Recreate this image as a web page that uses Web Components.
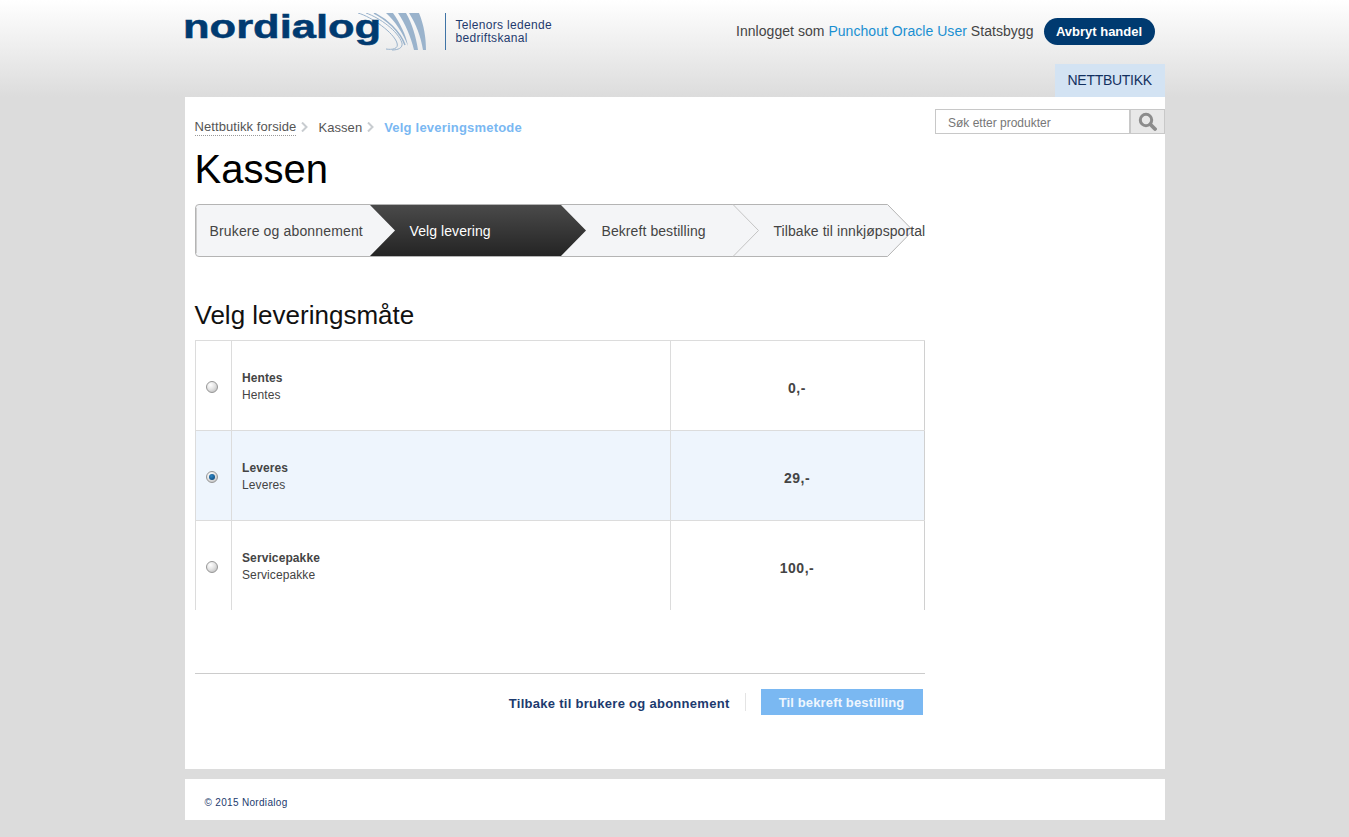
<!DOCTYPE html>
<html lang="no">
<head>
<meta charset="utf-8">
<title>Nordialog</title>
<style>
    html, body { margin: 0; padding: 0; }
    body {
        background: #dcdcdc;
        font-family: "Liberation Sans", Arial, sans-serif;
        color: #444;
    }
</style>
</head>
<body>
<nd-header></nd-header>
<nd-page>
    <nd-breadcrumb slot="main"></nd-breadcrumb>
    <h1-title slot="main">Kassen</h1-title>
    <nd-steps slot="main">
        <nd-step width="175" pad="15" style="letter-spacing:.15px">Brukere og abonnement</nd-step>
        <nd-step width="192" pad="40">Velg levering</nd-step>
        <nd-step width="172" pad="40">Bekreft bestilling</nd-step>
        <nd-step width="191" pad="40">Tilbake til innkjøpsportal</nd-step>
    </nd-steps>
    <nd-delivery slot="main">
        <nd-option name="Hentes" price="0,-"></nd-option>
        <nd-option name="Leveres" price="29,-" selected></nd-option>
        <nd-option name="Servicepakke" price="100,-"></nd-option>
    </nd-delivery>
    <nd-actions slot="main"></nd-actions>
    <nd-search slot="side"></nd-search>
</nd-page>
<nd-footer></nd-footer>

<script>
class NdHeader extends HTMLElement {
    constructor() {
        super();
        const shadowRoot = this.attachShadow({mode: 'open'});
        shadowRoot.innerHTML = `
            <style>
                :host {
                    display: block;
                    height: 97px;
                    background: linear-gradient(#fff 0, #dcdcdc 100%);
                }
                .wrap {
                    width: 980px;
                    height: 97px;
                    margin: 0 auto;
                    display: flex;
                    flex-direction: column;
                }
                .top {
                    height: 64px;
                    display: flex;
                    align-items: flex-start;
                }
                .logo {
                    display: flex;
                    width: 260px;
                    height: 38px;
                    margin-top: 13px;
                    position: relative;
                    overflow: visible;
                }
                .word {
                    font-weight: bold;
                    font-size: 33px;
                    line-height: 33px;
                    color: #003a70;
                    -webkit-text-stroke: .5px #003a70;
                    transform-origin: 0 0;
                    transform: scale(1.318, 1);
                    white-space: nowrap;
                    margin: -3px 0 0 -2px;
                    position: relative;
                    z-index: 1;
                }
                .swirl {
                    position: absolute;
                    left: 171px;
                    top: 0;
                }
                .tag {
                    margin-top: 13px;
                    height: 37px;
                    border-left: 1px solid #3f74a6;
                    padding: 6px 0 0 10px;
                    box-sizing: border-box;
                    font-size: 12px;
                    line-height: 13px;
                    letter-spacing: .32px;
                    color: #1f3a6e;
                    width: 200px;
                }
                .user {
                    margin-left: auto;
                    display: flex;
                    align-items: center;
                    height: 27px;
                    margin-top: 18px;
                    font-size: 14px;
                    color: #444;
                    white-space: pre;
                    padding-right: 10px;
                }
                .user .who { letter-spacing: .04px; margin-top: -2px; }
                .user a { color: #1a8fd1; text-decoration: none; }
                .btn {
                    margin-left: 10px;
                    width: 111px;
                    height: 27px;
                    border-radius: 14px;
                    background: #003a70;
                    color: #fff;
                    font-weight: bold;
                    font-size: 13px;
                    line-height: 27px;
                    text-align: center;
                }
                .tabs { display: flex; justify-content: flex-end; }
                .tab {
                    width: 110px;
                    box-sizing: border-box;
                    height: 33px;
                    line-height: 33px;
                    padding-left: 13px;
                    background: #d3e3f3;
                    color: #13315f;
                    font-size: 14px;
                    letter-spacing: -.28px;
                }
            </style>
            <div class="wrap">
                <div class="top">
                    <div class="logo">
                        <span class="word">nordialog</span>
                        <svg class="swirl" width="72" height="38" viewBox="0 0 72 38" fill="#9ab3cc" stroke="none">
                            <path d="M53 0H63C68 12 70 25 70 37H67C65 24 60 11 53 0Z"/>
                            <path d="M42 0H50C56 10 60 24 62 37H58C55 24 49 10 42 0Z"/>
                            <path d="M30 0H37C44 10 50 22 52 33C47 20 39 8 30 0Z"/>
                            <path d="M2 0C16 4 38 20 41 30C43 36 36 37 30 36" fill="none" stroke="#9ab3cc"/>
                            <path d="M10 0C24 5 42 18 46 30C47 35 42 37 36 37" fill="none" stroke="#9ab3cc"/>
                            <path d="M18 0C30 6 44 18 49 32" fill="none" stroke="#9ab3cc" stroke-width="1.5"/>
                        </svg>
                    </div>
                    <div class="tag">Telenors ledende<br>bedriftskanal</div>
                    <div class="user"><span class="who">Innlogget som <a href="#">Punchout Oracle User</a> Statsbygg</span><span class="btn">Avbryt handel</span></div>
                </div>
                <div class="tabs"><div class="tab">NETTBUTIKK</div></div>
            </div>
        `;
    }
}
customElements.define('nd-header', NdHeader);

class NdPage extends HTMLElement {
    constructor() {
        super();
        const shadowRoot = this.attachShadow({mode: 'open'});
        shadowRoot.innerHTML = `
            <style>
                :host {
                    display: flex;
                    width: 980px;
                    height: 672px;
                    margin: 0 auto;
                    background: #fff;
                }
                .main { width: 730px; margin-left: 10px; }
                .side { width: 230px; margin-left: 10px; padding-top: 12px; }
            </style>
            <div class="main"><slot name="main"></slot></div>
            <div class="side"><slot name="side"></slot></div>
        `;
    }
}
customElements.define('nd-page', NdPage);

class NdBreadcrumb extends HTMLElement {
    constructor() {
        super();
        const shadowRoot = this.attachShadow({mode: 'open'});
        shadowRoot.innerHTML = `
            <style>
                :host {
                    display: flex;
                    align-items: center;
                    height: 20px;
                    margin-top: 20px;
                    font-size: 13px;
                    letter-spacing: .08px;
                    color: #555;
                    white-space: nowrap;
                }
                a { color: #555; text-decoration: none; border-bottom: 1px dotted #999; line-height: 16px; }
                svg { margin: 0 10px 0 5px; }
                b { color: #7ab8f2; letter-spacing: .2px; }
            </style>
            <a href="#">Nettbutikk forside</a>
            <svg width="7" height="10" viewBox="0 0 7 10" fill="none" stroke="#c8ccd0" stroke-width="2"><path d="M1 0.5 5.5 5 1 9.5"/></svg>
            <span>Kassen</span>
            <svg width="7" height="10" viewBox="0 0 7 10" fill="none" stroke="#c8ccd0" stroke-width="2"><path d="M1 0.5 5.5 5 1 9.5"/></svg>
            <b>Velg leveringsmetode</b>
        `;
    }
}
customElements.define('nd-breadcrumb', NdBreadcrumb);

class H1Title extends HTMLElement {
    constructor() {
        super();
        const shadowRoot = this.attachShadow({mode: 'open'});
        shadowRoot.innerHTML = `
            <style>
                :host {
                    display: block;
                    height: 67px;
                    font-size: 40px;
                    line-height: 64px;
                    color: #000;
                }
            </style>
            <slot></slot>
        `;
    }
}
customElements.define('h1-title', H1Title);

class NdSteps extends HTMLElement {
    constructor() {
        super();
        const shadowRoot = this.attachShadow({mode: 'open'});
        shadowRoot.innerHTML = `
            <style>
                :host {
                    display: flex;
                    position: relative;
                    height: 53px;
                    width: 730px;
                }
                svg { position: absolute; left: 0; top: 0; }
                .row { display: flex; position: relative; }
            </style>
            <svg width="730" height="53" viewBox="0 0 730 53">
                <defs>
                    <linearGradient id="dark" x1="0" y1="0" x2="0" y2="1">
                        <stop offset="0" stop-color="#4a4a4a"/>
                        <stop offset="1" stop-color="#242424"/>
                    </linearGradient>
                </defs>
                <path d="M4 .5H692.5L718 26.500 692.500 52.500H4Q.5 52.500 .5 49V4Q.5 .5 4 .5Z" fill="#f4f5f7" stroke="#b4b4b4"/>
                <path d="M1.500 4V49" stroke="#d0d0d0" stroke-width="1"/>
                <path d="M538 .5 563.500 26.500 538 52.500" fill="none" stroke="#c4c4c4"/>
                <path d="M175 1H366L391 26.500 366 52H175L200 26.500Z" fill="url(#dark)"/>
            </svg>
            <div class="row"><slot></slot></div>
        `;
    }
}
customElements.define('nd-steps', NdSteps);

class NdStep extends HTMLElement {
    constructor() {
        super();
        const shadowRoot = this.attachShadow({mode: 'open'});
        shadowRoot.innerHTML = `
            <style>
                :host {
                    display: block;
                    height: 53px;
                    box-sizing: border-box;
                    font-size: 14px;
                    line-height: 54px;
                    letter-spacing: .08px;
                    white-space: nowrap;
                    color: #444;
                }
            </style>
            <slot></slot>
        `;
    }

    connectedCallback() {
        this.style.width = this.getAttribute('width') + 'px';
        this.style.paddingLeft = this.getAttribute('pad') + 'px';
        // second step sits on the dark arrow
        if (this.previousElementSibling && !this.previousElementSibling.previousElementSibling) {
            this.style.color = '#fff';
        }
    }
}
customElements.define('nd-step', NdStep);

class NdDelivery extends HTMLElement {
    constructor() {
        super();
        const shadowRoot = this.attachShadow({mode: 'open'});
        shadowRoot.innerHTML = `
            <style>
                :host { display: block; width: 730px; }
                h2 {
                    margin: 0;
                    height: 83px;
                    box-sizing: border-box;
                    padding-top: 43px;
                    font-size: 26px;
                    line-height: 30px;
                    font-weight: normal;
                    color: #111;
                }
                .list { border-top: 1px solid #dcdcdc; }
            </style>
            <h2>Velg leveringsmåte</h2>
            <div class="list"><slot></slot></div>
        `;
    }
}
customElements.define('nd-delivery', NdDelivery);

class NdOption extends HTMLElement {
    constructor() {
        super();
        const shadowRoot = this.attachShadow({mode: 'open'});
        const name = this.getAttribute('name');
        shadowRoot.innerHTML = `
            <style>
                :host {
                    display: grid;
                    grid-template-columns: 36px 439px 255px;
                    height: 89px;
                    font-size: 12px;
                    color: #444;
                }
                :host(:not(:last-child)) { border-bottom: 1px solid #dcdcdc; }
                :host([selected]) { background: #eef5fd; }
                .cell { display: flex; align-items: center; box-sizing: border-box; border-left: 1px solid #dcdcdc; }
                .radio-cell { justify-content: center; padding-right: 2px; padding-top: 2px; }
                .radio {
                    width: 12px;
                    height: 12px;
                    border-radius: 50%;
                    box-sizing: border-box;
                    border: 1px solid #969696;
                    background: radial-gradient(circle at 35% 30%, #fff 0, #e4e4e4 45%, #b4b4b4 100%);
                    display: flex;
                    align-items: center;
                    justify-content: center;
                }
                .radio i {
                    display: none;
                    width: 6px;
                    height: 6px;
                    border-radius: 50%;
                    background: radial-gradient(circle at 40% 35%, #2f86c4, #063d70);
                }
                :host([selected]) .radio i { display: block; }
                .info { padding: 2px 0 0 10.500px; line-height: 17px; letter-spacing: .1px; }
                .info b { display: block; color: #444; }
                .price {
                    border-right: 1px solid #d0d0d0;
                    justify-content: center;
                    font-weight: bold;
                    font-size: 14px;
                    letter-spacing: .5px;
                    padding-top: 4px;
                    color: #444;
                }
            </style>
            <div class="cell radio-cell"><span class="radio"><i></i></span></div>
            <div class="cell info"><div><b>${name}</b>${name}</div></div>
            <div class="cell price">${this.getAttribute('price')}</div>
        `;
    }
}
customElements.define('nd-option', NdOption);

class NdActions extends HTMLElement {
    constructor() {
        super();
        const shadowRoot = this.attachShadow({mode: 'open'});
        shadowRoot.innerHTML = `
            <style>
                :host {
                    display: flex;
                    align-items: center;
                    justify-content: flex-end;
                    box-sizing: border-box;
                    width: 730px;
                    height: 43px;
                    margin-top: 63px;
                    padding: 14px 2px 0 0;
                    border-top: 1px solid #ccc;
                    font-size: 13px;
                    font-weight: bold;
                }
                a { color: #1c3a6e; text-decoration: none; letter-spacing: .28px; padding-top: 2px; }
                .sep { width: 1px; height: 18px; background: #e4e4e4; margin: 0 15px; }
                .go {
                    width: 162px;
                    height: 26px;
                    line-height: 28px;
                    text-align: center;
                    background: #7ab8f2;
                    color: #eef6fe;
                    font-size: 13px;
                    letter-spacing: .14px;
                }
            </style>
            <a href="#">Tilbake til brukere og abonnement</a>
            <span class="sep"></span>
            <span class="go">Til bekreft bestilling</span>
        `;
    }
}
customElements.define('nd-actions', NdActions);

class NdSearch extends HTMLElement {
    constructor() {
        super();
        const shadowRoot = this.attachShadow({mode: 'open'});
        shadowRoot.innerHTML = `
            <style>
                :host {
                    display: flex;
                    width: 230px;
                    height: 25px;
                    box-sizing: border-box;
                    border: 1px solid #c8c8c8;
                    font-size: 12px;
                    color: #777;
                }
                .field { flex: 1; line-height: 25px; padding-left: 12.500px; padding-top: 1px; }
                .btn {
                    width: 33px;
                    background: #e8e8e8;
                    border-left: 2px solid #c8c8c8;
                    display: flex;
                    align-items: center;
                    justify-content: center;
                }
            </style>
            <div class="field">Søk etter produkter</div>
            <div class="btn">
                <svg width="19" height="19" viewBox="0 0 19 19" fill="none" stroke="#8c8c8c">
                    <circle cx="8" cy="8" r="5.700" stroke-width="3"/>
                    <path d="M12.500 12.500 17 17" stroke-width="3.800" stroke-linecap="round"/>
                </svg>
            </div>
        `;
    }
}
customElements.define('nd-search', NdSearch);

class NdFooter extends HTMLElement {
    constructor() {
        super();
        const shadowRoot = this.attachShadow({mode: 'open'});
        shadowRoot.innerHTML = `
            <style>
                :host {
                    display: block;
                    box-sizing: border-box;
                    width: 980px;
                    height: 41px;
                    margin: 10px auto 0;
                    padding: 17px 0 0 20px;
                    background: #fff;
                    font-size: 10px;
                    line-height: 13px;
                    color: #1c3a6e;
                    letter-spacing: .32px;
                }
            </style>
            © 2015 Nordialog
        `;
    }
}
customElements.define('nd-footer', NdFooter);
</script>
</body>
</html>
